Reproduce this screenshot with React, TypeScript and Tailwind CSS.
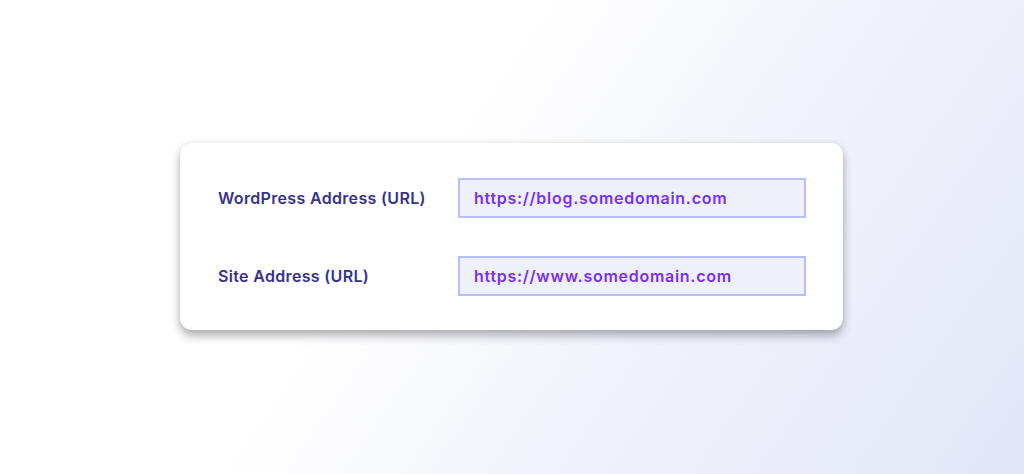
import React from "react";

export default function App() {
  const rows = [
    { label: "WordPress Address (URL)", value: "https://blog.somedomain.com" },
    { label: "Site Address (URL)", value: "https://www.somedomain.com" },
  ];
  return (
    <div
      className="w-[1024px] h-[474px] overflow-hidden flex items-start justify-center pt-[143px] bg-[linear-gradient(125deg,#ffffff_0%,#ffffff_40%,#eef0fa_72%,#e2e6f7_100%)]"
      style={{ fontFamily: '"Inter", "Open Sans", sans-serif' }}
    >
      <div className="ml-[-1px] w-[663px] h-[187px] bg-white rounded-[12px] shadow-[0_6px_10px_rgba(60,60,70,0.38),0_0_6px_rgba(0,0,0,0.08)] pl-[38px] pr-[37px] pt-[35px] flex flex-col gap-[38px]">
        {rows.map((r) => (
          <div key={r.label} className="flex items-center">
            <div className="w-[240px] text-[16px] font-semibold text-[#37328f] tracking-[0.33px]">
              {r.label}
            </div>
            <div className="w-[348px] h-[40px] border-2 border-[#b6bff7] bg-[#eef0fa] flex items-center pl-[14px]">
              <span className="text-[16px] font-semibold text-[#7b2ff0] tracking-[0.72px]">{r.value}</span>
            </div>
          </div>
        ))}
      </div>
    </div>
  );
}
